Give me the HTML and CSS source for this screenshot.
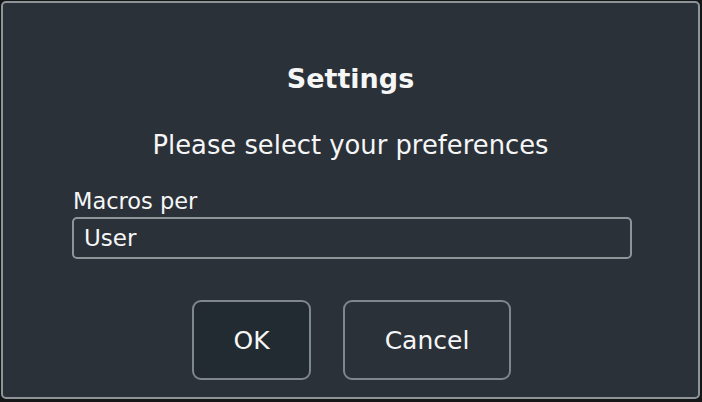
FILE: index.html
```html
<!DOCTYPE html>
<html>
<head>
<meta charset="utf-8">
<link rel="stylesheet" href="styles.css">
</head>
<body>
<div class="dialog">
  <h1 class="title">Settings</h1>
  <p class="subtitle">Please select your preferences</p>
  <div class="field">
    <label class="label">Macros per</label>
    <div class="input">User</div>
  </div>
  <div class="buttons">
    <button class="btn btn-ok">OK</button>
    <button class="btn btn-cancel">Cancel</button>
  </div>
</div>
</body>
</html>
```
FILE: styles.css
```css
html, body {
  margin: 0;
  padding: 0;
  background: #141618;
  width: 702px;
  height: 402px;
  overflow: hidden;
}
.dialog {
  box-sizing: border-box;
  margin: 1px 0 0 1px;
  width: 699px;
  height: 398px;
  border: 2px solid #8e9599;
  border-radius: 5px;
  background: #2a3139;
  color: #f6f6f6;
  font-family: "DejaVu Sans", Verdana, sans-serif;
  display: flex;
  flex-direction: column;
  align-items: center;
}
.title {
  margin: 59px 0 0 0;
  font-size: 27px;
  line-height: 34px;
  font-weight: bold;
}
.subtitle {
  margin: 34px 0 0 0;
  font-size: 25.8px;
  line-height: 30px;
}
.field {
  align-self: stretch;
  margin: 28px 0 0 69px;
  width: 560px;
  display: flex;
  flex-direction: column;
}
.label {
  font-size: 22.5px;
  line-height: 26px;
  margin-bottom: 3px;
  padding-left: 1px;
}
.input {
  box-sizing: border-box;
  height: 42px;
  border: 2px solid #8e9599;
  border-radius: 5px;
  font-size: 23px;
  line-height: 37px;
  padding: 1px 0 0 10px;
}
.buttons {
  margin-top: 41px;
  display: flex;
  gap: 32px;
  margin-left: 2px;
}
.btn {
  box-sizing: border-box;
  height: 80px;
  border: 2px solid #7f878c;
  border-radius: 9px;
  color: #f6f6f6;
  font-family: "DejaVu Sans", Verdana, sans-serif;
  font-size: 25px;
  padding: 0;
}
.btn-ok {
  width: 119px;
  background: #222a32;
}
.btn-cancel {
  width: 168px;
  background: #2a3139;
}
```
